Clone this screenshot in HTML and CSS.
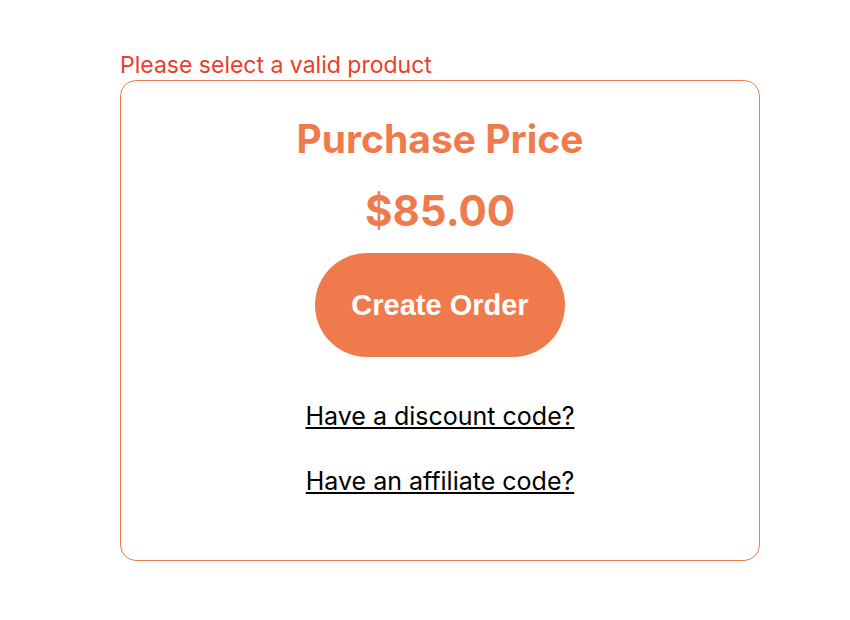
FILE: index.html
```html
<!DOCTYPE html>
<html>
<head>
    <title>Purchase</title>
    <link rel="stylesheet" href="styles.css">
</head>
<body>
    <div class="wrap">
        <p class="error-msg">Please select a valid product</p>

        <div class="price-card">
            <h2 class="price-title">Purchase Price</h2>
            <p class="price-amount">$85.00</p>

            <button class="order-btn">Create Order</button>

            <div class="code-links">
                <a href="#" class="code-link">Have a discount code?</a>
                <a href="#" class="code-link">Have an affiliate code?</a>
            </div>
        </div>
    </div>
</body>
</html>
```

FILE: styles.css
```css
body {
    margin: 0;
    background-color: #ffffff;
    font-family: Inter, "Noto Sans", sans-serif;
}

.wrap {
    width: 640px;
    padding: 50px 0 0 120px;
}

.error-msg {
    margin: 0;
    color: #e8402c;
    font-size: 23px;
    line-height: 30px;
}

.price-card {
    border: 1px solid #ef7b4d;
    border-radius: 16px;
    text-align: center;
    padding: 30px 0 64px;
}

.price-title {
    margin: 0;
    color: #ef7b4d;
    font-size: 39px;
    font-weight: 700;
    line-height: 56px;
}

.price-amount {
    margin: 16px 0 0;
    color: #ef7b4d;
    font-size: 42px;
    font-weight: 700;
    line-height: 56px;
}

.order-btn {
    margin-top: 14px;
    padding: 0 36px;
    height: 104px;
    border: none;
    border-radius: 52px;
    background-color: #ef7b4d;
    color: white;
    font-family: "Liberation Sans", Arial, sans-serif;
    font-size: 29px;
    font-weight: 700;
    cursor: pointer;
}

.code-links {
    display: flex;
    flex-direction: column;
    align-items: center;
    gap: 35px;
    margin-top: 44px;
}

.code-link {
    color: #000000;
    font-size: 25px;
    line-height: 30px;
}
```
